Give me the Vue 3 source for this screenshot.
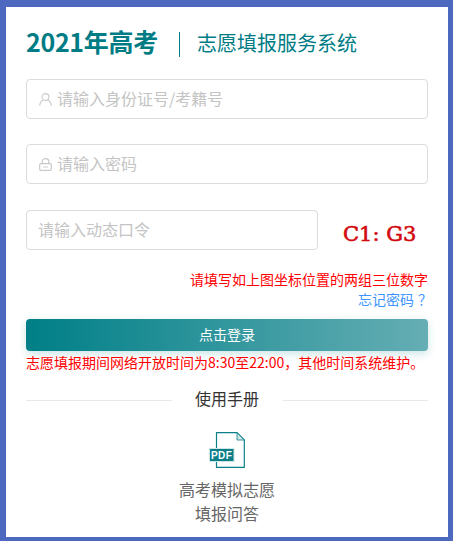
<script setup>
const hint = '请填写如上图坐标位置的两组三位数字'
const notice = '志愿填报期间网络开放时间为8:30至22:00，其他时间系统维护。'
</script>

<template>
  <div class="frame">
    <div class="panel">
      <header class="head">
        <h1 class="year">2021年高考</h1>
        <span class="rule"></span>
        <h2 class="sys">志愿填报服务系统</h2>
      </header>

      <label class="field first">
        <svg class="ico" viewBox="0 0 13 13" fill="none" stroke="#c9c9c9" stroke-width="1.1">
          <circle cx="6.5" cy="4" r="3.4" />
          <path d="M.7 12.8c.2-3 2-5.1 3.6-5.8M12.3 12.8c-.2-3-2-5.1-3.6-5.8" />
        </svg>
        <span class="ph">请输入身份证号/考籍号</span>
      </label>

      <label class="field second">
        <svg class="ico" viewBox="0 0 13 13" fill="none" stroke="#c9c9c9" stroke-width="1.2">
          <rect x=".7" y="5.6" width="11.6" height="6.7" rx="1" />
          <path d="M3.2 5.5V3.3C3.2 1.6 4.7.7 6.5.7s3.3.9 3.3 2.6v2.2M4.2 9h4.6" />
        </svg>
        <span class="ph">请输入密码</span>
      </label>

      <div class="row">
        <label class="field short"><span class="ph">请输入动态口令</span></label>
        <div class="captcha">C1: G3</div>
      </div>

      <p class="hint">{{ hint }}</p>
      <a class="forgot">忘记密码<span class="q">？</span></a>
      <button class="btn" type="button">点击登录</button>
      <p class="notice">{{ notice }}</p>

      <div class="sep"><span class="line"></span><span class="sep-t">使用手册</span><span class="line"></span></div>

      <div class="doc">
        <svg class="pdf" viewBox="0 0 36 36" width="36" height="36">
          <path d="M7.5 .7H28l7.3 7.3v27.3H7.5z" fill="#fff" stroke="#0b8088" stroke-width="1.2" />
          <path d="M28 .7v7.3h7.3z" fill="#cfe6e8" stroke="#0b8088" stroke-width=".8" />
          <rect x="0" y="16" width="25.5" height="14" fill="#cfe6e8" />
          <rect x="1" y="17" width="23.5" height="12" fill="#0b7e86" />
          <text x="12.7" y="26.8" text-anchor="middle" class="pdf-t">PDF</text>
        </svg>
        <div class="doc-t">高考模拟志愿<br />填报问答</div>
      </div>
    </div>
  </div>
</template>

<style scoped>
.frame {
  box-sizing: border-box;
  width: 453px;
  height: 541px;
  padding: 7px 5px 4px 6px;
  background: #4c69bf;
  font-family: "Noto Sans CJK SC", "Noto Sans", sans-serif;
}
.panel {
  box-sizing: border-box;
  height: 100%;
  padding: 0 20px;
  background: #fff;
  overflow: hidden;
}
.head {
  display: flex;
  align-items: center;
  height: 26px;
  margin-top: 24px;
}
.year {
  margin: 0;
  padding-bottom: 7px;
  font-size: 25px;
  line-height: 26px;
  font-weight: 700;
  letter-spacing: -.3px;
  color: #007c85;
  white-space: nowrap;
}
.rule {
  width: 1.5px;
  height: 25px;
  margin: 0 16.5px 0 21px;
  background: #007c85;
}
.sys {
  margin: 0;
  padding-bottom: 3px;
  font-size: 20px;
  line-height: 26px;
  font-weight: 400;
  color: #007c85;
  white-space: nowrap;
}
.field {
  box-sizing: border-box;
  display: flex;
  align-items: center;
  height: 40px;
  padding-left: 11px;
  border: 1px solid #dcdcdc;
  border-radius: 4px;
}
.first { margin-top: 22px; }
.second { margin-top: 25px; }
.ico {
  width: 13px;
  height: 13px;
  margin: 0 5px 0 1px;
  flex: none;
}
.ph {
  padding-bottom: 2px;
  font-size: 16px;
  color: #c4c4c4;
  white-space: nowrap;
}
.row {
  display: flex;
  align-items: center;
  margin-top: 26px;
}
.short { width: 292px; flex: none; }
.captcha {
  margin: 8px 0 0 25px;
  font-family: "DejaVu Serif", serif;
  font-size: 21px;
  line-height: 30px;
  font-weight: 400;
  -webkit-text-stroke: .6px #d20a10;
  color: #d20a10;
  white-space: nowrap;
}
.hint {
  margin: 19px 0 0;
  font-size: 14px;
  line-height: 20px;
  color: #f00;
  text-align: right;
  white-space: nowrap;
}
.forgot {
  display: block;
  font-size: 14px;
  line-height: 20px;
  color: #3e95ff;
  text-align: right;
}
.q {
  margin-left: 4px;
  margin-right: -4px;
}
.btn {
  display: block;
  width: 100%;
  height: 32px;
  margin-top: 10px;
  padding: 0 0 2px;
  border: 0;
  border-radius: 4px;
  background: linear-gradient(to right, #007f87, #65aeb4);
  box-shadow: 0 3px 8px rgba(0, 127, 135, .2);
  color: #fff;
  font: inherit;
  font-size: 14px;
  line-height: 30px;
}
.notice {
  margin: 1px 0 0;
  font-size: 14px;
  line-height: 20px;
  color: #f00;
  white-space: nowrap;
}
.sep {
  display: flex;
  align-items: center;
  margin-top: 18px;
  height: 20px;
}
.line {
  flex: 1;
  height: 1px;
  background: #e8e8e8;
}
.sep-t {
  width: 111px;
  padding-bottom: 4px;
  font-size: 16px;
  line-height: 20px;
  color: #333;
  text-align: center;
}
.doc {
  display: flex;
  flex-direction: column;
  align-items: center;
  margin-top: 22px;
}
.pdf { display: block; }
.pdf-t {
  font-family: "Liberation Sans", sans-serif;
  font-size: 10px;
  font-weight: 700;
  fill: #fff;
  letter-spacing: .5px;
}
.doc-t {
  margin-top: 9px;
  font-size: 16px;
  line-height: 24px;
  color: #666;
  text-align: center;
}
</style>
